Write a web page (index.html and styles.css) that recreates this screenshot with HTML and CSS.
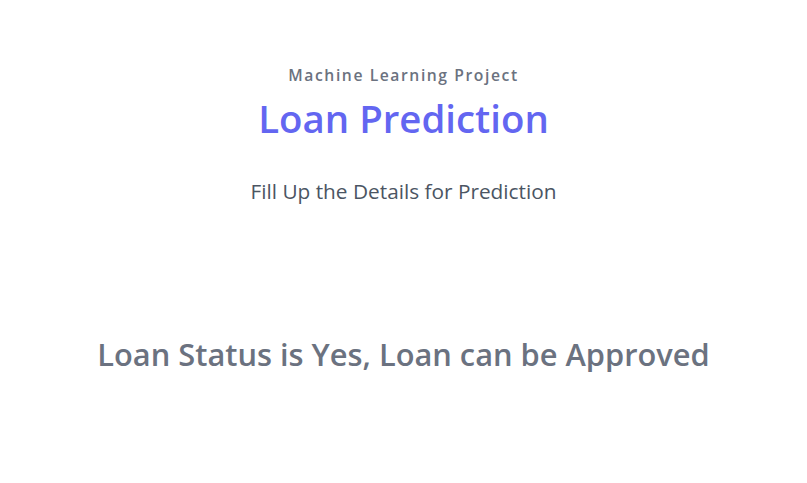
FILE: index.html
```html
<!DOCTYPE html>
<html>
<head>
<meta charset="utf-8">
<link rel="stylesheet" href="styles.css">
</head>
<body>
<section class="hero">
  <div class="head">
    <h2 class="kicker">Machine Learning Project</h2>
    <h1 class="title">Loan Prediction</h1>
    <p class="lead">Fill Up the Details for Prediction</p>
  </div>
  <h2 class="status">Loan Status is Yes, Loan can be Approved</h2>
</section>
</body>
</html>
```

FILE: styles.css
```css
html, body {
  margin: 0;
  padding: 0;
  background: #ffffff;
}
body {
  font-family: "Open Sans", "Noto Sans", sans-serif;
  color: #4b5563;
}
.hero {
  display: flex;
  flex-direction: column;
  align-items: center;
  padding-top: 65px;
}
.head {
  display: flex;
  flex-direction: column;
  align-items: center;
  text-align: center;
}
.kicker {
  margin: 0;
  font-size: 15.7px;
  line-height: 20px;
  font-weight: 600;
  letter-spacing: 0.1em;
  color: #6b7280;
}
.title {
  margin: 11px 0 0;
  font-size: 38.4px;
  line-height: 44px;
  font-weight: 600;
  color: #6366f1;
}
.lead {
  margin: 37px 0 0;
  font-size: 20.8px;
  line-height: 28px;
  color: #4b5563;
}
.status {
  margin: 131px 0 0;
  font-size: 30.8px;
  line-height: 36px;
  font-weight: 600;
  color: #6b7280;
}
```
